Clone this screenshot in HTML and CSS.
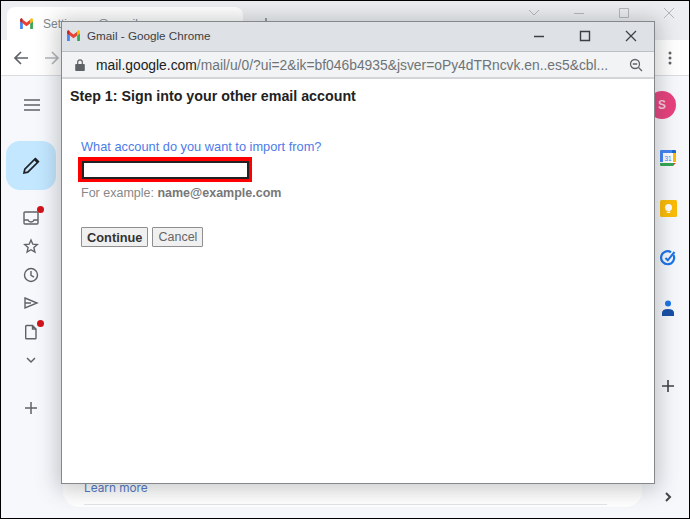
FILE: index.html
```html
<!DOCTYPE html>
<html lang="en">
<head>
    <meta charset="UTF-8">
    <meta name="viewport" content="width=device-width, initial-scale=1.0">
    <title>Gmail - Google Chrome</title>
    <link rel="stylesheet" href="styles.css">
</head>
<body>
    <div class="screen">
        <div class="tabstrip">
            <div class="tab">
                <svg class="gmail-logo" viewBox="0 0 16 12"><path d="M1 12h3V6L1 3z" fill="#4285f4"/><path d="M12 12h3V3l-3 3z" fill="#34a853"/><path d="M12 2v4l3-2.2V2c0-1.4-1.500-2-2.500-1.300z" fill="#fbbc04"/><path d="M4 6V2l4 3 4-3v4L8 9z" fill="#ea4335"/><path d="M1 2v1.800L4 6V2L3.500 .7C2.500 0 1 .6 1 2z" fill="#c5221f"/></svg>
                <span class="tab-title">Settings - @gmail.com</span>
            </div>
            <svg class="new-tab" width="10" height="10" viewBox="0 0 10 10"><path d="M5 0v10M0 5h10" stroke="#5f6368" stroke-width="1.2"/></svg>
            <div class="win-controls faded">
                <svg width="14" height="14" viewBox="0 0 14 14"><path d="M2 4l5 5 5-5" fill="none" stroke="#b4b7bb"/></svg>
                <svg width="14" height="14" viewBox="0 0 14 14"><path d="M2 7.500h10" stroke="#b4b7bb"/></svg>
                <svg width="14" height="14" viewBox="0 0 14 14"><path d="M2.500 2.500h9v9h-9z" fill="none" stroke="#b4b7bb"/></svg>
                <svg width="14" height="14" viewBox="0 0 14 14"><path d="M2 2l10 10M12 2L2 12" stroke="#b4b7bb"/></svg>
            </div>
        </div>
        <div class="toolbar">
            <svg width="15" height="14" viewBox="0 0 15 14"><path d="M15 7H2M8 1L2 7l6 6" fill="none" stroke="#5f6368" stroke-width="1.7"/></svg>
            <svg width="15" height="14" viewBox="0 0 15 14"><path d="M0 7h13M7 1l6 6-6 6" fill="none" stroke="#b3b5b8" stroke-width="1.7"/></svg>
            <svg class="kebab" width="4" height="14" viewBox="0 0 4 14"><circle cx="2" cy="2" r="1.500" fill="#5f6368"/><circle cx="2" cy="7" r="1.500" fill="#5f6368"/><circle cx="2" cy="12" r="1.500" fill="#5f6368"/></svg>
        </div>
        <div class="app">
            <div class="left-rail">
                <svg class="menu-icon" width="16" height="12" viewBox="0 0 16 12"><path d="M0 1h16M0 6h16M0 11h16" stroke="#5f6368" stroke-width="1.5"/></svg>
                <div class="compose">
                    <svg width="20" height="20" viewBox="0 0 20 20"><path d="M3 17l.8-3.800L13.500 3.500l3 3L6.800 16.200z" fill="none" stroke="#202124" stroke-width="1.7"/><path d="M13 3l1.500-1.500 4 4L17 7z" fill="#202124"/></svg>
                </div>
                <div class="rail-icons">
                    <div class="rail-icon">
                        <svg width="16" height="16" viewBox="0 0 16 16"><path d="M2 2h12a1 1 0 0 1 1 1v10a1 1 0 0 1-1 1H2a1 1 0 0 1-1-1V3a1 1 0 0 1 1-1zM1 10h4c.5 1.500 1.500 2 3 2s2.500-.5 3-2h4" fill="none" stroke="#5f6368" stroke-width="1.4"/></svg>
                        <span class="dot"></span>
                    </div>
                    <div class="rail-icon">
                        <svg width="16" height="16" viewBox="0 0 16 16"><path d="M8 2l1.800 4.200 4.500.4-3.400 3 1 4.400L8 11.700 4.100 14l1-4.400-3.400-3 4.500-.4z" fill="none" stroke="#5f6368" stroke-width="1.4"/></svg>
                    </div>
                    <div class="rail-icon">
                        <svg width="16" height="16" viewBox="0 0 16 16"><circle cx="8" cy="8" r="6.500" fill="none" stroke="#5f6368" stroke-width="1.4"/><path d="M8 4v4.300l3 1.800" fill="none" stroke="#5f6368" stroke-width="1.4"/></svg>
                    </div>
                    <div class="rail-icon">
                        <svg width="16" height="16" viewBox="0 0 16 16"><path d="M2 3l12 5-12 5zM2 8h6" fill="none" stroke="#5f6368" stroke-width="1.4"/></svg>
                    </div>
                    <div class="rail-icon">
                        <svg width="16" height="16" viewBox="0 0 16 16"><path d="M3.500 1.500h6l3.500 3.500v9a.8.8 0 0 1-.8.8H3.500a.8.8 0 0 1-.8-.8V2.300a.8.8 0 0 1 .8-.8zM9.500 1.500V5H13" fill="none" stroke="#5f6368" stroke-width="1.4"/></svg>
                        <span class="dot"></span>
                    </div>
                    <div class="rail-icon">
                        <svg width="12" height="8" viewBox="0 0 12 8"><path d="M2 2l4 4 4-4" fill="none" stroke="#5f6368" stroke-width="1.5"/></svg>
                    </div>
                </div>
                <svg class="rail-plus" width="14" height="14" viewBox="0 0 14 14"><path d="M7 1v12M1 7h12" stroke="#5f6368" stroke-width="1.5"/></svg>
            </div>
            <div class="main-panel">
                <div class="card">
                    <a class="learn-more" href="#">Learn more</a>
                    <div class="card-line"></div>
                </div>
            </div>
            <div class="right-rail">
                <div class="avatar">S</div>
                <div class="side-apps">
                    <svg width="16" height="16" viewBox="0 0 16 16"><rect width="16" height="16" rx="1" fill="#fff"/><path d="M0 1a1 1 0 0 1 1-1h11v3H3v9H0z" fill="#4285f4"/><path d="M12 0h3a1 1 0 0 1 1 1v2h-4z" fill="#1967d2"/><path d="M13 3h3v9h-3z" fill="#fbbc04"/><path d="M0 13h13v3H1a1 1 0 0 1-1-1z" fill="#34a853"/><path d="M13 13h3l-3 3z" fill="#ea4335"/><text x="8" y="10.500" class="cal-date">31</text></svg>
                    <svg width="17" height="17" viewBox="0 0 17 17"><rect width="17" height="17" rx="1.500" fill="#fbbc04"/><circle cx="8.500" cy="7.500" r="3.500" fill="#fff"/><path d="M6.800 11.500h3.400V13H6.800z" fill="#fff"/></svg>
                    <svg width="16" height="16" viewBox="0 0 16 16"><path d="M13.500 5a6.500 6.500 0 1 1-2.500-2.800" fill="none" stroke="#1a73e8" stroke-width="2.2"/><path d="M5.500 8l2.300 2.300L14.500 2" fill="none" stroke="#1a73e8" stroke-width="2"/></svg>
                    <svg width="14" height="17" viewBox="0 0 14 17"><circle cx="7" cy="3.500" r="3" fill="#1a73e8"/><path d="M1 16v-3c0-2.500 2-4 6-4s6 1.500 6 4v3z" fill="#174ea6"/></svg>
                </div>
                <svg class="side-plus" width="14" height="14" viewBox="0 0 14 14"><path d="M7 1v12M1 7h12" stroke="#3c4043" stroke-width="1.6"/></svg>
                <svg class="side-chevron" width="8" height="10" viewBox="0 0 8 10"><path d="M2 1l4 4-4 4" fill="none" stroke="#444746" stroke-width="2"/></svg>
            </div>
        </div>

        <div class="popup">
            <div class="popup-title">
                <svg class="gmail-logo" viewBox="0 0 16 12"><path d="M1 12h3V6L1 3z" fill="#4285f4"/><path d="M12 12h3V3l-3 3z" fill="#34a853"/><path d="M12 2v4l3-2.200V2c0-1.400-1.500-2-2.500-1.300z" fill="#fbbc04"/><path d="M4 6V2l4 3 4-3v4L8 9z" fill="#ea4335"/><path d="M1 2v1.800L4 6V2L3.500 .7C2.500 0 1 .6 1 2z" fill="#c5221f"/></svg>
                <span class="popup-name">Gmail - Google Chrome</span>
                <div class="win-controls">
                    <svg width="14" height="14" viewBox="0 0 14 14"><path d="M2 7.500h10" stroke="#3c4043" stroke-width="1.5"/></svg>
                    <svg width="14" height="14" viewBox="0 0 14 14"><path d="M2.500 2.500h9v9h-9z" fill="none" stroke="#3c4043" stroke-width="1.4"/></svg>
                    <svg width="14" height="14" viewBox="0 0 14 14"><path d="M2 2l10 10M12 2L2 12" stroke="#3c4043" stroke-width="1.2"/></svg>
                </div>
            </div>
            <div class="popup-address">
                <svg width="10" height="12" viewBox="0 0 10 12"><path d="M1 5h8a.8.8 0 0 1 .8.8v5.400a.8.8 0 0 1-.8.8H1a.8.8 0 0 1-.8-.8V5.800A.8.8 0 0 1 1 5z" fill="#5f6368"/><path d="M2.700 5V3.200a2.300 2.300 0 0 1 4.600 0V5" fill="none" stroke="#5f6368" stroke-width="1.2"/></svg>
                <span class="url"><b>mail.google.com</b>/mail/u/0/?ui=2&amp;ik=bf046b4935&amp;jsver=oPy4dTRncvk.en..es5&amp;cbl...</span>
                <svg width="14" height="14" viewBox="0 0 14 14"><circle cx="6" cy="6" r="4.500" fill="none" stroke="#5f6368" stroke-width="1.3"/><path d="M3.800 6h4.400M9.500 9.500L13 13" fill="none" stroke="#5f6368" stroke-width="1.3"/></svg>
            </div>
            <div class="popup-body">
                <h1>Step 1: Sign into your other email account</h1>
                <label class="field-label" for="account">What account do you want to import from?</label>
                <div class="highlight">
                    <input id="account" class="field" type="text">
                </div>
                <p class="hint">For example: <b>name@example.com</b></p>
                <div class="buttons">
                    <button class="primary">Continue</button>
                    <button>Cancel</button>
                </div>
            </div>
        </div>
    </div>
</body>
</html>
```

FILE: styles.css
```css
* {
    box-sizing: border-box;
}
html, body {
    margin: 0;
    height: 100%;
    overflow: hidden;
}
body {
    font-family: "Liberation Sans", Arial, sans-serif;
}
.screen {
    position: relative;
    width: 690px;
    height: 519px;
    display: flex;
    flex-direction: column;
    border: 1px solid #000;
    background: #f6f8fc;
}
svg {
    flex: none;
    display: block;
}

/* browser behind the popup */
.tabstrip {
    height: 39px;
    flex: none;
    display: flex;
    background: #eceef1;
    padding: 6px 0 0 6px;
}
.tab {
    width: 236px;
    height: 33px;
    display: flex;
    align-items: flex-start;
    gap: 9px;
    padding: 11px 0 0 12px;
    background: #fff;
    border-radius: 8px 8px 0 0;
}
.gmail-logo {
    width: 15px;
    height: 11px;
    flex: none;
}
.tab-title {
    font-size: 12px;
    color: #80868b;
    margin-top: -1px;
}
.new-tab {
    margin: 11px 0 0 18px;
}
.win-controls {
    display: flex;
    margin-left: auto;
    gap: 32px;
}
.win-controls.faded {
    padding: 0 13px 0 0;
    gap: 31px;
    margin-top: -1px;
    height: 14px;
}
.toolbar {
    height: 36px;
    flex: none;
    display: flex;
    align-items: center;
    gap: 17px;
    padding: 0 17px 0 12px;
    background: #fff;
    border-bottom: 1px solid #dadce0;
}
.kebab {
    margin-left: auto;
}
.app {
    flex: 1;
    display: flex;
    min-height: 0;
}
.left-rail {
    width: 61px;
    flex: none;
    display: flex;
    flex-direction: column;
    align-items: center;
    padding: 23px 2px 0 0;
}
.menu-icon {
    margin-left: 2px;
}
.compose {
    width: 50px;
    height: 49px;
    margin: 30px 0 0 1px;
    display: flex;
    align-items: center;
    justify-content: center;
    border-radius: 14px;
    background: #c2e7ff;
}
.rail-icons {
    margin-top: 19px;
    display: flex;
    flex-direction: column;
    align-items: center;
    gap: 11.5px;
}
.rail-icon {
    position: relative;
    width: 18px;
    height: 17px;
    display: flex;
    align-items: center;
    justify-content: center;
}
.dot {
    position: absolute;
    top: -3px;
    right: -4px;
    width: 7px;
    height: 7px;
    border-radius: 50%;
    background: #d3131b;
}
.rail-plus {
    margin-top: 32px;
}
.main-panel {
    flex: 1;
    display: flex;
    flex-direction: column;
    justify-content: flex-end;
    padding: 0 12px 11px 1px;
}
.card {
    height: 60px;
    display: flex;
    flex-direction: column;
    justify-content: flex-end;
    background: #fff;
    border-radius: 0 0 16px 16px;
}
.learn-more {
    margin: 0 0 9px 21px;
    font-family: "Inter", "Liberation Sans", sans-serif;
    font-size: 11.8px;
    color: #4f75c4;
    text-decoration: none;
}
.card-line {
    height: 1px;
    margin: 0 35px 2px 21px;
    background: #e3e5e8;
}
.right-rail {
    width: 35px;
    flex: none;
    display: flex;
    flex-direction: column;
    align-items: center;
    padding: 15px 7px 0 0;
}
.avatar {
    width: 28px;
    height: 28px;
    margin-left: -12px;
    border-radius: 50%;
    background: #e8407c;
    color: #f6c9da;
    font-size: 12px;
    font-weight: bold;
    display: flex;
    align-items: center;
    justify-content: center;
}
.side-apps {
    margin-top: 31px;
    display: flex;
    flex-direction: column;
    align-items: center;
    gap: 33.5px;
}
.cal-date {
    font-family: "Liberation Sans", sans-serif;
    font-size: 6.5px;
    fill: #4285f4;
    text-anchor: middle;
}
.side-plus {
    margin-top: 62px;
}
.side-chevron {
    margin-top: 99px;
}

/* popup window */
.popup {
    position: absolute;
    left: 60px;
    top: 20px;
    width: 594px;
    height: 463px;
    display: flex;
    flex-direction: column;
    background: #fff;
    border: 1px solid #85888b;
    box-shadow: 0 2px 20px 4px rgba(60, 64, 67, 0.28);
}
.popup-title {
    height: 30px;
    flex: none;
    display: flex;
    align-items: center;
    gap: 6px;
    padding: 0 16px 2px 4px;
    background: #dee1e6;
    border-bottom: 1px solid #bcbfc3;
}
.popup-name {
    font-size: 11.7px;
    color: #3c4043;
}
.popup-address {
    height: 27px;
    flex: none;
    display: flex;
    align-items: center;
    padding: 0 11px 0 13px;
    background: #f1f3f4;
    border-bottom: 2px solid #d3d5d8;
}
.url {
    flex: 1;
    margin-left: 11px;
    font-size: 13.85px;
    color: #6f7377;
    white-space: nowrap;
    overflow: hidden;
}
.url b {
    font-weight: normal;
    color: #202124;
}
.popup-body {
    flex: 1;
    padding: 9px 8px;
}
h1 {
    margin: 0;
    font-size: 14.25px;
    line-height: 16px;
    font-weight: bold;
    color: #222;
}
.field-label {
    display: block;
    margin: 36px 0 0 11px;
    font-size: 12.8px;
    line-height: 14px;
    color: #4d7be8;
}
.highlight {
    width: 174px;
    height: 25px;
    margin: 3px 0 0 8px;
    padding: 3.5px;
    background: #ff0000;
}
.field {
    display: block;
    width: 100%;
    height: 100%;
    padding: 0;
    background: #fff;
    border: 2px solid #222;
    outline: 0;
}
.hint {
    margin: 4px 0 0 11px;
    font-size: 12.5px;
    line-height: 14px;
    color: #888;
}
.hint b {
    color: #777;
}
.buttons {
    display: flex;
    gap: 4px;
    margin: 27px 0 0 11px;
}
button {
    height: 20px;
    padding: 0 5px;
    font-family: inherit;
    font-size: 12.5px;
    color: #666;
    background: #f0f0f0;
    border: 1px solid #8f8f8f;
    border-radius: 1px;
}
button.primary {
    font-size: 12.8px;
    font-weight: bold;
    color: #333;
}
```
